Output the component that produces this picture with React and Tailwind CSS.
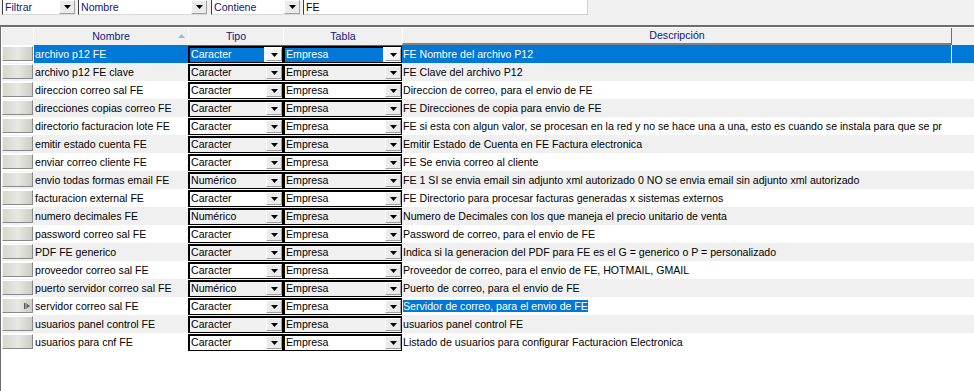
const rows = [
  { nombre: "archivo p12 FE", tipo: "Caracter", desc: "FE Nombre del archivo P12" },
  { nombre: "archivo p12 FE clave", tipo: "Caracter", desc: "FE Clave del archivo P12" },
  { nombre: "direccion correo sal FE", tipo: "Caracter", desc: "Direccion de correo, para el envio de FE" },
  { nombre: "direcciones copias correo FE", tipo: "Caracter", desc: "FE Direcciones de copia para envio de FE" },
  { nombre: "directorio facturacion lote FE", tipo: "Caracter", desc: "FE si esta con algun valor, se procesan en la red y no se hace una a una, esto es cuando se instala para que se pr" },
  { nombre: "emitir estado cuenta FE", tipo: "Caracter", desc: "Emitir Estado de Cuenta en FE Factura electronica" },
  { nombre: "enviar correo cliente FE", tipo: "Caracter", desc: "FE Se envia correo al cliente" },
  { nombre: "envio todas formas email FE", tipo: "Numérico", desc: "FE 1 SI se envia email sin adjunto xml autorizado 0 NO se envia email sin adjunto xml autorizado" },
  { nombre: "facturacion external FE", tipo: "Caracter", desc: "FE Directorio para procesar facturas generadas x sistemas externos" },
  { nombre: "numero decimales FE", tipo: "Numérico", desc: "Numero de Decimales con los que maneja el precio unitario de venta" },
  { nombre: "password correo sal FE", tipo: "Caracter", desc: "Password de correo, para el envio de FE" },
  { nombre: "PDF FE generico", tipo: "Caracter", desc: "Indica si la generacion del PDF para FE es el G = generico o P = personalizado" },
  { nombre: "proveedor correo sal FE", tipo: "Caracter", desc: "Proveedor de correo, para el envio de FE, HOTMAIL, GMAIL" },
  { nombre: "puerto servidor correo sal FE", tipo: "Numérico", desc: "Puerto de correo, para el envio de FE" },
  { nombre: "servidor correo sal FE", tipo: "Caracter", desc: "Servidor de correo, para el envio de FE", editing: true },
  { nombre: "usuarios panel control FE", tipo: "Caracter", desc: "usuarios panel control FE" },
  { nombre: "usuarios para cnf FE", tipo: "Caracter", desc: "Listado de usuarios para configurar Facturacion Electronica" },
];

function Arrow() {
  return (
    <svg width="7" height="4" viewBox="0 0 7 4">
      <path d="M0 0h7L3.5 4z" fill="#000" />
    </svg>
  );
}

function DropBtn({ light }) {
  return (
    <div className={`w-[16px] h-full flex items-center justify-center border border-white border-r-[#a0a0a0] border-b-[#a0a0a0] ${light ? "bg-[#f7f7f7]" : "bg-[#ebebeb]"}`}>
      <Arrow />
    </div>
  );
}

function FilterCombo({ width, label }) {
  return (
    <div className={`${width} h-[15px] flex bg-white border-l border-[#3c3c3c] border-b border-b-[#dadada]`}>
      <div className="flex-1 pl-[2px] leading-[14px] text-[#14147e]">{label}</div>
      <DropBtn />
    </div>
  );
}

function CellCombo({ width, value, bg, selected }) {
  return (
    <div className={`${width} h-[18px] pt-px ${selected ? "bg-[#0078d7]" : bg}`}>
      <div className={`h-[17px] flex border border-black shadow-[inset_1px_1px_0_#000] ${selected ? "bg-[#0078d7] text-white" : ""}`}>
        <div className="flex-1 pl-[2px] leading-[14px] whitespace-nowrap overflow-hidden">{value}</div>
        <div className={`py-px h-full ${selected ? "bg-white pl-[2px]" : ""}`}>
          <DropBtn light={selected} />
        </div>
      </div>
    </div>
  );
}

export default function App() {
  return (
    <div className="w-[974px] h-[391px] overflow-hidden bg-[#f0f0f0] font-['Liberation_Sans',Arial,sans-serif] text-[10.6px] text-black">
      {/* filter bar */}
      <div className="flex h-[15px]">
        <div className="ml-[2px]"><FilterCombo width="w-[73px]" label="Filtrar" /></div>
        <div className="ml-[3px]"><FilterCombo width="w-[129px]" label="Nombre" /></div>
        <div className="ml-[4px]"><FilterCombo width="w-[89px]" label="Contiene" /></div>
        <div className="ml-[3px] w-[285px] h-[15px] bg-white border-l border-[#3c3c3c] border-r border-r-[#d0d0d0] border-b border-b-[#d0d0d0] pl-[2px] leading-[14px]">FE</div>
      </div>

      {/* grid */}
      <div className="mt-[10px] h-[366px] bg-white border-t-2 border-[#6e6e6e] border-l border-l-[#6e6e6e] pl-px">
        <div className="flex h-[18px] bg-[#f0f0f0] border-t border-white text-[#14147e] leading-[17px]">
          <div className="w-[31px]" />
          <div className="w-[155px] border-l border-white text-center relative">
            Nombre
            <svg className="absolute right-[3px] top-[6px]" width="7" height="4" viewBox="0 0 7 4">
              <path d="M3.5 0L7 4H0z" fill="#a9b6cc" />
            </svg>
          </div>
          <div className="w-[95px] border-l border-white text-center">Tipo</div>
          <div className="w-[119px] border-l border-white text-center">Tabla</div>
          <div className="w-[549px] border-l border-white border-b-2 border-b-[#808080] text-center leading-[15px]">Descripción</div>
          <div className="w-px bg-[#6e6e6e]" />
          <div className="flex-1" />
        </div>

        {rows.map((r, i) => {
          const selected = i === 0;
          const bg = i % 2 === 1 ? "bg-[#f0f0f0]" : "bg-white";
          return (
            <div key={r.nombre} className={`flex h-[18px] leading-[18px] ${bg}`}>
              <div className="w-[32px] pt-px">
                <div className="w-[31px] h-[15px] flex items-center justify-end pr-[2px] bg-linear-to-r from-[#d6d6ce] via-[#e8e8e3] to-[#cdcdc6] border border-t-white border-l-[#f4f4f4] border-r-[#8a8a8a] border-b-[#8a8a8a]">
                  {r.editing && (
                    <svg width="6" height="6" viewBox="0 0 6 6">
                      <path d="M0.5 0v6M2 0v6" stroke="#555" strokeWidth="1" />
                      <path d="M3 1l3 2-3 2z" fill="#555" />
                    </svg>
                  )}
                </div>
              </div>
              <div className={`w-[154px] pl-px whitespace-nowrap overflow-hidden ${selected ? "bg-[#0078d7] text-white" : ""}`}>{r.nombre}</div>
              <CellCombo width="w-[95px]" value={r.tipo} bg={bg} selected={selected} />
              <CellCombo width="w-[119px]" value="Empresa" bg={bg} selected={selected} />
              <div className={`w-[549px] pl-px whitespace-nowrap overflow-hidden ${selected ? "bg-[#0078d7] text-white" : ""}`}>
                {r.editing ? <span className="bg-[#0078d7] text-white">{r.desc}</span> : r.desc}
              </div>
              <div className={`w-px ${selected ? "bg-white" : ""}`} />
              <div className={`flex-1 ${selected ? "bg-[#0078d7]" : ""}`} />
            </div>
          );
        })}
      </div>
    </div>
  );
}
